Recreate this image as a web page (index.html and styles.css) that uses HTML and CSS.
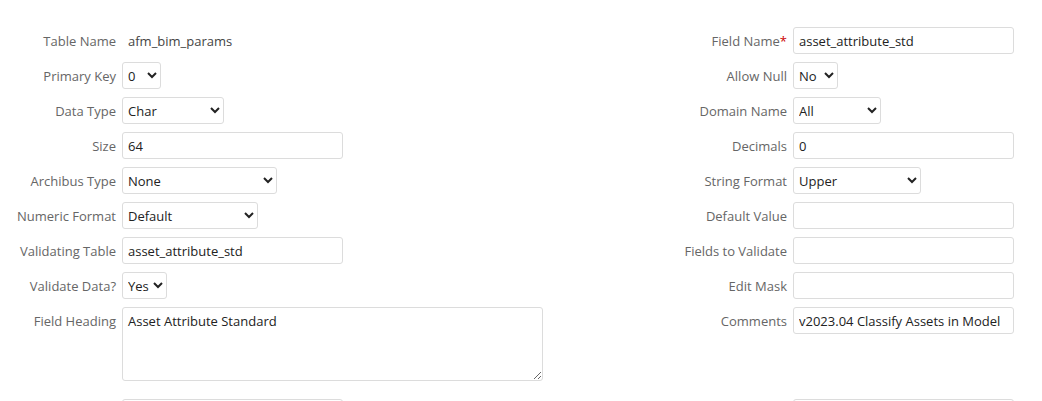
FILE: index.html
```html
<!DOCTYPE html>
<html>
<head>
<meta charset="utf-8">
<link rel="stylesheet" href="styles.css">
</head>
<body>
<form class="form">
  <label class="lbl">Table Name</label>
  <div class="ctl"><span class="value">afm_bim_params</span></div>
  <label class="lbl">Field Name<span class="req">*</span></label>
  <div class="ctl"><input class="inp" type="text" value="asset_attribute_std"></div>

  <label class="lbl">Primary Key</label>
  <div class="ctl"><select class="sel w39"><option>0</option></select></div>
  <label class="lbl">Allow Null</label>
  <div class="ctl"><select class="sel w45"><option>No</option></select></div>

  <label class="lbl">Data Type</label>
  <div class="ctl"><select class="sel w102"><option>Char</option></select></div>
  <label class="lbl">Domain Name</label>
  <div class="ctl"><select class="sel w88"><option>All</option></select></div>

  <label class="lbl">Size</label>
  <div class="ctl"><input class="inp" type="text" value="64"></div>
  <label class="lbl">Decimals</label>
  <div class="ctl"><input class="inp" type="text" value="0"></div>

  <label class="lbl">Archibus Type</label>
  <div class="ctl"><select class="sel w155"><option>None</option></select></div>
  <label class="lbl">String Format</label>
  <div class="ctl"><select class="sel w128"><option>Upper</option></select></div>

  <label class="lbl">Numeric Format</label>
  <div class="ctl"><select class="sel w136"><option>Default</option></select></div>
  <label class="lbl">Default Value</label>
  <div class="ctl"><input class="inp" type="text" value=""></div>

  <label class="lbl">Validating Table</label>
  <div class="ctl"><input class="inp" type="text" value="asset_attribute_std"></div>
  <label class="lbl">Fields to Validate</label>
  <div class="ctl"><input class="inp" type="text" value=""></div>

  <label class="lbl">Validate Data?</label>
  <div class="ctl"><select class="sel w45"><option>Yes</option></select></div>
  <label class="lbl">Edit Mask</label>
  <div class="ctl"><input class="inp" type="text" value=""></div>

  <label class="lbl top">Field Heading</label>
  <div class="ctl top"><textarea class="area">Asset Attribute Standard</textarea></div>
  <label class="lbl top">Comments</label>
  <div class="ctl top"><input class="inp" type="text" value="v2023.04 Classify Assets in Model"></div>

  <label class="lbl next"></label>
  <div class="ctl next"><input class="inp" type="text" value=""></div>
  <label class="lbl next"></label>
  <div class="ctl next"><input class="inp" type="text" value=""></div>
</form>
</body>
</html>
```

FILE: styles.css
```css
html, body {
  margin: 0;
  padding: 0;
  background: #fff;
}
body {
  font-family: "Open Sans", "Noto Sans", sans-serif;
  font-size: 13px;
  color: #333;
  overflow: hidden;
}
.form {
  display: grid;
  grid-template-columns: 116px 1fr 150px 221px;
  column-gap: 6px;
  row-gap: 8px;
  padding: 27px 28px 0 0;
  align-items: center;
}
.lbl {
  text-align: right;
  color: #666;
  white-space: nowrap;
  line-height: 18px;
}
.req {
  color: #c00;
}
.ctl {
  display: flex;
  align-items: center;
  min-height: 27px;
}
.value {
  padding-left: 6px;
  color: #444;
}
.inp {
  box-sizing: border-box;
  width: 221px;
  height: 27px;
  border: 1px solid #dcdcdc;
  border-radius: 3px;
  padding: 0 5px;
  font-family: inherit;
  font-size: 13px;
  color: #222;
  background: #fff;
  outline: none;
}
.sel {
  box-sizing: border-box;
  height: 27px;
  border: 1px solid #dcdcdc;
  border-radius: 3px;
  padding: 0 0 0 1px;
  font-family: inherit;
  font-size: 13px;
  color: #222;
  background: #fff;
}
.w39 { width: 39px; }
.w45 { width: 45px; }
.w88 { width: 88px; }
.w102 { width: 102px; }
.w128 { width: 128px; }
.w136 { width: 136px; }
.w155 { width: 155px; }
.top {
  align-self: start;
}
.lbl.top {
  padding-top: 5px;
}
.area {
  box-sizing: border-box;
  width: 421px;
  height: 74px;
  border: 1px solid #dcdcdc;
  border-radius: 3px;
  padding: 4px 5px;
  font-family: inherit;
  font-size: 13px;
  color: #222;
  line-height: 18px;
  margin: 0;
  outline: none;
}
.next {
  margin-top: 10px;
}
```
